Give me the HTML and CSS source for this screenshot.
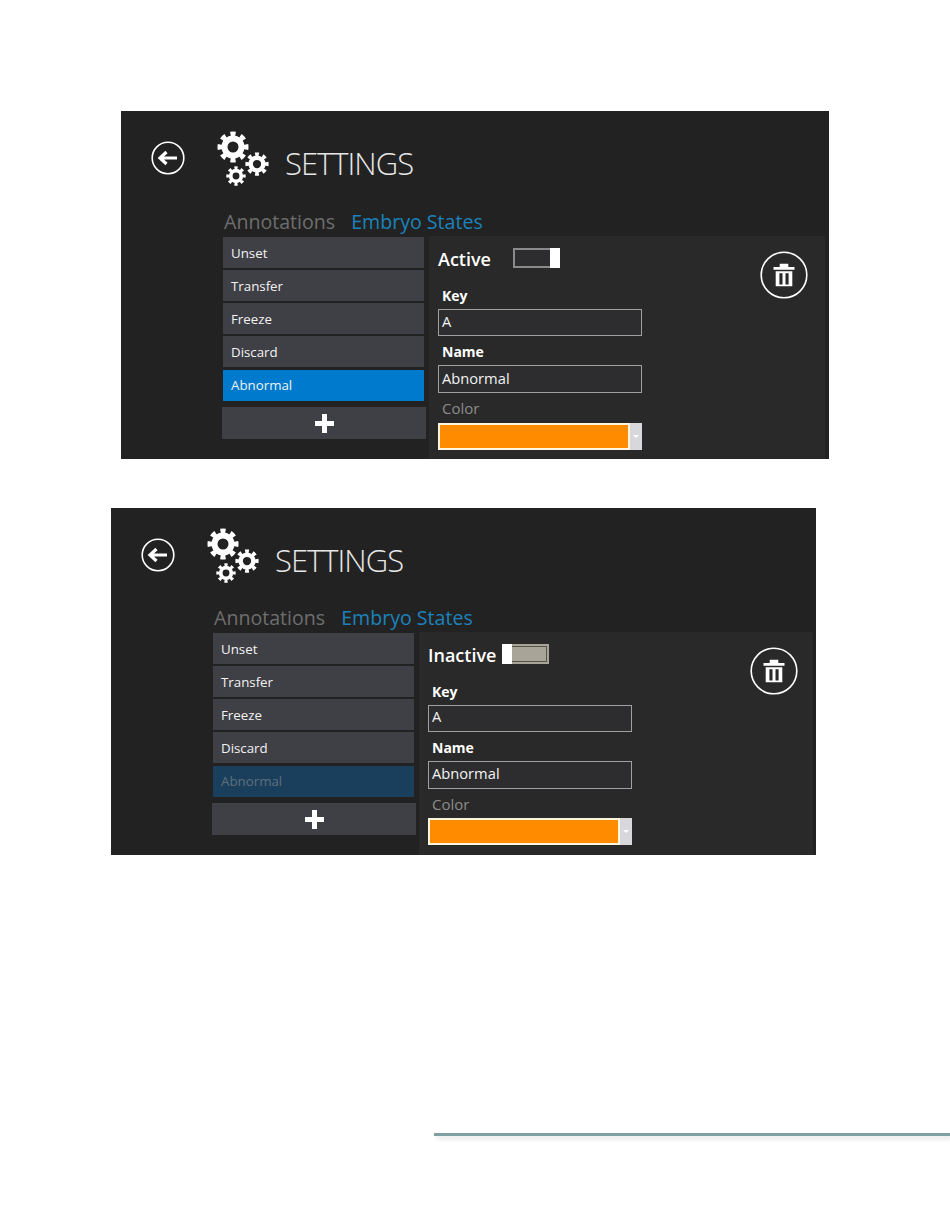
FILE: index.html
```html
<!DOCTYPE html>
<html lang="en">
<head>
    <meta charset="UTF-8">
    <title>Settings</title>
    <link rel="stylesheet" href="styles.css">
</head>

<body>
    <svg class="defs">
        <symbol id="gear" viewBox="-16 -16 32 32">
            <circle r="8.5" class="gear-ring"></circle>
            <circle r="13" pathLength="16" class="gear-teeth"></circle>
        </symbol>
        <symbol id="back" viewBox="-17 -17 34 34">
            <circle r="15.8" class="icon-ring"></circle>
            <path d="M9 0H-7M-1.5 -6L-8 0L-1.5 6" class="back-arrow"></path>
        </symbol>
        <symbol id="trash" viewBox="-24 -24 48 48">
            <circle r="22.8" class="icon-ring"></circle>
            <path d="M-4.3 -11.3H4.3V-8H10.5V-5.3H-10.5V-8H-4.3ZM-8.3 -3.7H8.3V11.3H-8.3ZM-4.6 -1.8V9.5H-1.5V-1.8ZM1.5 -1.8V9.5H4.6V-1.8Z" class="trash-body"></path>
        </symbol>
        <symbol id="plus" viewBox="0 0 19 19">
            <path d="M7 0H12V7H19V12H12V19H7V12H0V7H7Z" class="trash-body"></path>
        </symbol>
    </svg>

    <section class="shot shot-active">
        <header class="top">
            <svg class="icon-back"><use href="#back"></use></svg>
            <div class="gears">
                <svg class="gear gear-lg"><use href="#gear"></use></svg>
                <svg class="gear gear-md"><use href="#gear"></use></svg>
                <svg class="gear gear-sm"><use href="#gear"></use></svg>
            </div>
            <h1>SETTINGS</h1>
        </header>
        <nav class="tabs">
            <span class="tab">Annotations</span>
            <span class="tab tab-on">Embryo States</span>
        </nav>
        <div class="body">
            <div class="states">
                <div class="item">Unset</div>
                <div class="item">Transfer</div>
                <div class="item">Freeze</div>
                <div class="item">Discard</div>
                <div class="item item-on">Abnormal</div>
                <div class="add"><svg class="icon-plus"><use href="#plus"></use></svg></div>
            </div>
            <div class="panel">
                <div class="form">
                    <div class="status">
                        <span class="status-label">Active</span>
                        <div class="toggle toggle-on"><span class="thumb"></span></div>
                    </div>
                    <div class="label label-first">Key</div>
                    <div class="input">A</div>
                    <div class="label">Name</div>
                    <div class="input input-tall">Abnormal</div>
                    <div class="label label-dim">Color</div>
                    <div class="select"><span class="swatch"></span><span class="arrow"></span></div>
                </div>
                <svg class="icon-trash"><use href="#trash"></use></svg>
            </div>
        </div>
    </section>

    <section class="shot shot-inactive">
        <header class="top">
            <svg class="icon-back"><use href="#back"></use></svg>
            <div class="gears">
                <svg class="gear gear-lg"><use href="#gear"></use></svg>
                <svg class="gear gear-md"><use href="#gear"></use></svg>
                <svg class="gear gear-sm"><use href="#gear"></use></svg>
            </div>
            <h1>SETTINGS</h1>
        </header>
        <nav class="tabs">
            <span class="tab">Annotations</span>
            <span class="tab tab-on">Embryo States</span>
        </nav>
        <div class="body">
            <div class="states">
                <div class="item">Unset</div>
                <div class="item">Transfer</div>
                <div class="item">Freeze</div>
                <div class="item">Discard</div>
                <div class="item item-off">Abnormal</div>
                <div class="add"><svg class="icon-plus"><use href="#plus"></use></svg></div>
            </div>
            <div class="panel">
                <div class="form">
                    <div class="status">
                        <span class="status-label">Inactive</span>
                        <div class="toggle toggle-off"><span class="thumb"></span></div>
                    </div>
                    <div class="label label-first">Key</div>
                    <div class="input">A</div>
                    <div class="label">Name</div>
                    <div class="input input-tall">Abnormal</div>
                    <div class="label label-dim">Color</div>
                    <div class="select"><span class="swatch"></span><span class="arrow"></span></div>
                </div>
                <svg class="icon-trash"><use href="#trash"></use></svg>
            </div>
        </div>
    </section>

    <div class="rule"></div>
</body>

</html>
```

FILE: styles.css
```css
* {
    padding: 0;
    margin: 0;
    box-sizing: border-box;
}
body {
    height: 1229px;
    overflow: hidden;
    padding-top: 111px;
    background-color: #fff;
    font-family: "Open Sans", "Liberation Sans", sans-serif;
    color: #fff;
}
.defs {
    display: none;
}
.shot {
    display: flex;
    flex-direction: column;
    background-color: #222;
}
.shot-active {
    width: 708px;
    height: 348px;
    margin-left: 121px;
}
.shot-inactive {
    width: 705px;
    height: 347px;
    margin: 49px 0 0 111px;
}
.top {
    display: flex;
    align-items: flex-start;
    height: 100px;
    padding-left: 30px;
}
.shot-inactive .top {
    height: 99px;
}
.icon-back {
    width: 34px;
    height: 34px;
    margin-top: 30px;
}
.icon-ring {
    fill: none;
    stroke: #fff;
    stroke-width: 1.6;
}
.back-arrow {
    fill: none;
    stroke: #fff;
    stroke-width: 3.2;
}
.trash-body {
    fill: #fff;
    fill-rule: evenodd;
}
.gears {
    position: relative;
    width: 68px;
    height: 100px;
    margin-left: 32px;
}
.gear {
    position: absolute;
}
.gear-lg {
    left: 0;
    top: 20px;
    width: 32px;
    height: 32px;
}
.gear-md {
    left: 28px;
    top: 41px;
    width: 24px;
    height: 24px;
}
.gear-sm {
    left: 9px;
    top: 55px;
    width: 20px;
    height: 20px;
}
.gear-ring {
    fill: none;
    stroke: #fff;
    stroke-width: 6;
}
.gear-teeth {
    fill: none;
    stroke: #fff;
    stroke-width: 5;
    stroke-dasharray: 1 1;
    stroke-dashoffset: 0.5;
}
h1 {
    margin-top: 31px;
    font-size: 31px;
    letter-spacing: -1px;
    line-height: 42px;
    font-weight: 300;
    color: #e6e6e6;
}
.tabs {
    display: flex;
    gap: 16px;
    height: 25px;
    padding-left: 103px;
    font-size: 19.6px;
    line-height: 22px;
}
.tab {
    color: #6e6e6e;
}
.tab-on {
    color: #1b82bb;
}
.body {
    display: flex;
    flex: 1;
}
.states {
    display: flex;
    flex-direction: column;
    width: 204px;
    margin: 1px 0 0 101px;
}
.item {
    height: 31px;
    margin: 0 2px 2px 1px;
    padding-left: 8px;
    background-color: #3f3f46;
    font-size: 13.3px;
    line-height: 33px;
    color: #f2f2f2;
}
.item-on {
    margin-top: 1px;
    background-color: #007acc;
    line-height: 31px;
}
.item-off {
    margin-top: 1px;
    background-color: #1a3f5c;
    color: #5f6f7c;
    line-height: 31px;
}
.add {
    display: flex;
    justify-content: center;
    align-items: center;
    height: 32px;
    margin-top: 4px;
    background-color: #3f3f46;
}
.icon-plus {
    width: 19px;
    height: 19px;
}
.panel {
    display: flex;
    align-items: flex-start;
    flex: 1;
    margin: 0 4px 0 3px;
    padding: 12px 0 0 9px;
    background-color: #292929;
}
.shot-inactive .panel {
    margin-right: 3px;
}
.form {
    width: 204px;
}
.status {
    display: flex;
    align-items: center;
    height: 20px;
}
.status-label {
    width: 75px;
    padding-top: 2px;
    font-size: 18px;
    font-weight: 600;
}
.shot-inactive .status-label {
    width: 74px;
}
.toggle {
    display: flex;
    width: 47px;
    height: 20px;
    border: 2px solid #8a8a8a;
}
.toggle-on {
    justify-content: flex-end;
    background-color: #2d2d30;
}
.toggle-off {
    background-color: #a8a498;
    border-color: #a8a498;
    box-shadow: inset 0 0 0 1px #55534c;
}
.thumb {
    width: 10px;
    margin: -2px;
    background-color: #fff;
}
.label {
    height: 20px;
    margin: 6px 0 3px 4px;
    font-size: 14px;
    line-height: 20px;
    font-weight: 700;
}
.label-first {
    margin-top: 18px;
}
.label-dim {
    margin-top: 5px;
    margin-bottom: 5px;
    font-size: 15px;
    font-weight: 400;
    color: #8c8c8c;
}
.shot-inactive .label-dim {
    margin-bottom: 4px;
}
.input {
    height: 27px;
    padding-left: 3px;
    border: 1px solid #a0a0a0;
    background-color: #2d2d30;
    font-size: 14.7px;
    line-height: 23px;
    color: #f2f2f2;
}
.input-tall {
    height: 28px;
    line-height: 24px;
}
.shot-inactive .input {
    line-height: 21px;
}
.shot-inactive .input-tall {
    line-height: 22px;
}
.select {
    display: flex;
    height: 27px;
}
.swatch {
    flex: 1;
    border: 2px solid #fff6e0;
    background-color: #ff8c00;
}
.arrow {
    display: flex;
    justify-content: center;
    align-items: center;
    width: 12px;
    background-color: #d8d8dc;
}
.arrow::after {
    content: "";
    border: 3px solid transparent;
    border-top-color: #fff;
    margin-top: 3px;
}
.icon-trash {
    width: 48px;
    height: 48px;
    margin: 3px 0 0 118px;
}
.rule {
    height: 3px;
    margin: 278px 0 0 434px;
    background-color: #7f9fa3;
    box-shadow: 2px 3px 4px rgba(0, 0, 0, 0.12);
}
```
